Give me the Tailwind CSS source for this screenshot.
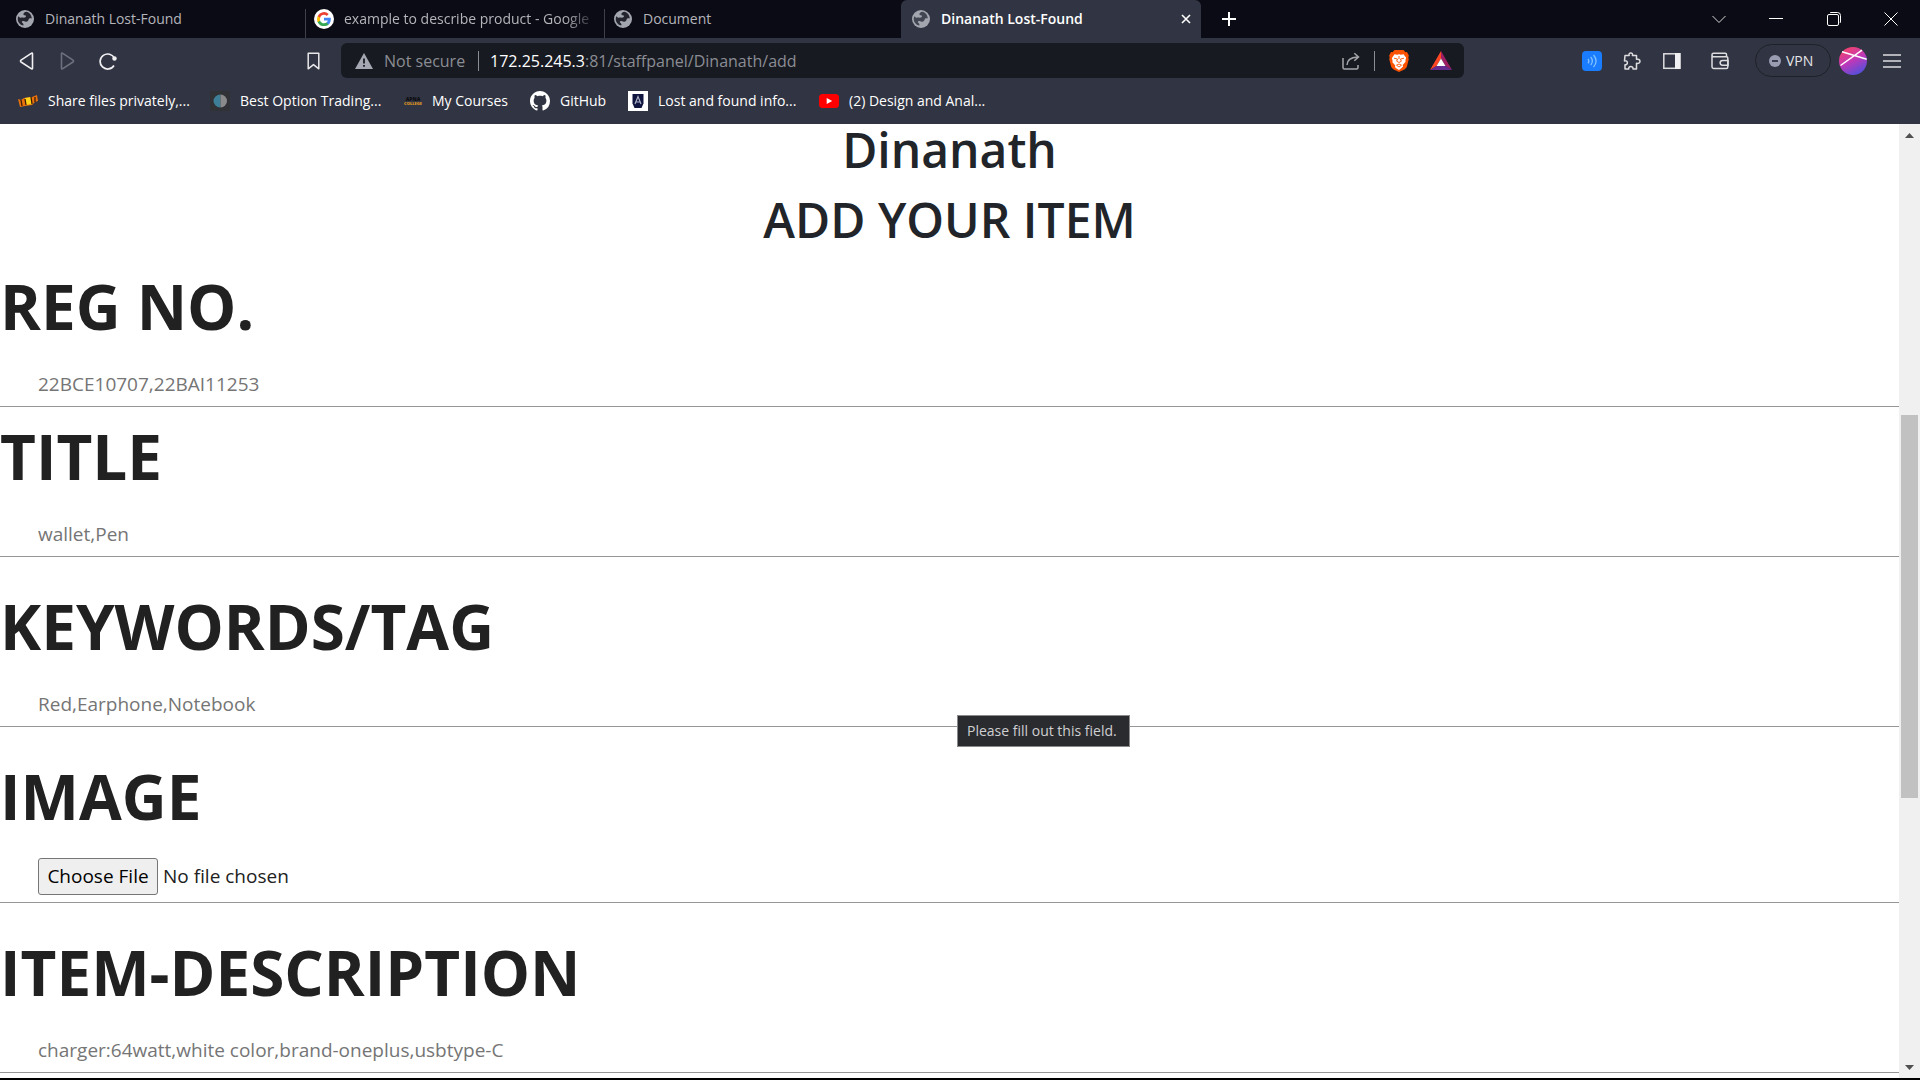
<!DOCTYPE html>
<html lang="en">
<head>
<meta charset="utf-8">
<title>Dinanath Lost-Found</title>
<script src="https://cdn.jsdelivr.net/npm/@tailwindcss/browser@4"></script>
</head>
<body class="flex h-screen flex-col overflow-hidden border-b-2 border-black bg-white font-['Open_Sans',sans-serif]">

<svg class="hidden" aria-hidden="true">
  <symbol id="globe" viewBox="0 0 18 18">
    <circle cx="9" cy="9" r="9" fill="#a3a6ae"/>
    <path d="M10.2 1.7C9 2 7.6 2.700 7.400 4c-.1 1 .5 1.300 1.500 1.300 1.400 0 1.300 1.500.5 2-.8.5-2 .3-3.200.3-1.200 0-1.800.5-2.400 0C3.200 7.200 2.900 6.500 2.200 6.600c-1 2.600-.4 5.400 1.600 7.200 1 .9 2.200 1.600 3.500 1.800.4-.8.100-1.700-.5-2.300-.7-.6-1.300-1.400-.6-2 .8-.6 2-.3 2.900.2 1 .5 2.400.1 3-.8.5-.8.4-1.800 1.200-2.300.8-.5 1.700-.2 2.500 0C15.600 5 13.500 2.300 10.200 1.700Z" fill="currentColor"/>
  </symbol>
</svg>

<header class="flex-none bg-[#313442] text-sm text-white">
  <!-- Tab strip -->
  <div class="flex h-[38px] items-stretch bg-[#0b0b15] text-[#b4b5ba]">
    <div role="tab" class="flex w-[305px] items-center gap-[11px] pl-4">
      <svg class="size-[18px] flex-none text-[#24242e]"><use href="#globe"/></svg><span>Dinanath Lost-Found</span>
    </div>
    <div role="tab" class="relative flex w-[299px] items-center gap-[10px] pl-[9px] pr-1">
      <i class="absolute bottom-0 left-0 top-[9px] w-px bg-[#3f4049]"></i>
      <svg class="size-5 flex-none" viewBox="0 0 20 20">
        <circle cx="10" cy="10" r="10" fill="#fff"/>
        <path d="M16.800 10.200c0-.5 0-.9-.1-1.400H10v2.700h3.800c-.2.900-.6 1.600-1.400 2.100v1.800h2.300c1.300-1.300 2.100-3.100 2.100-5.200Z" fill="#4285f4"/>
        <path d="M10 17.100c1.900 0 3.500-.6 4.700-1.700l-2.300-1.800c-.6.4-1.400.7-2.400.7-1.800 0-3.400-1.200-3.900-2.900H3.700v1.800A7 7 0 0 0 10 17.100Z" fill="#34a853"/>
        <path d="M6.100 11.400a4.200 4.200 0 0 1 0-2.700V6.900H3.700a7 7 0 0 0 0 6.300l2.400-1.800Z" fill="#fbbc05"/>
        <path d="M10 5.800c1 0 2 .4 2.700 1.100l2-2A7 7 0 0 0 3.700 6.900l2.400 1.800C6.600 7 8.200 5.800 10 5.800Z" fill="#ea4335"/>
      </svg>
      <span class="whitespace-nowrap [mask-image:linear-gradient(to_right,#000_90%,#0004)]">example to describe product - Google</span>
    </div>
    <div role="tab" class="relative flex w-[297px] items-center gap-[11px] pl-[10px]">
      <i class="absolute bottom-0 left-0 top-[9px] w-px bg-[#3f4049]"></i>
      <svg class="size-[18px] flex-none text-[#24242e]"><use href="#globe"/></svg><span>Document</span>
    </div>
    <div role="tab" aria-selected="true" class="flex w-[300px] items-center gap-[11px] rounded-t-md bg-[#313442] pl-[11px] pr-[10px] font-semibold text-white">
      <svg class="size-[18px] flex-none text-[#424552]"><use href="#globe"/></svg><span class="flex-1">Dinanath Lost-Found</span>
      <button aria-label="Close tab" class="block"><svg class="size-[10px]" viewBox="0 0 10 10" fill="none" stroke="#fff" stroke-width="1.600"><path d="M1 1l8 8M9 1l-8 8"/></svg></button>
    </div>
    <button aria-label="New tab" class="ml-5"><svg class="size-4" viewBox="0 0 16 16" stroke="#fff" stroke-width="2"><path d="M8 1v14M1 8h14"/></svg></button>
    <div class="ml-auto flex w-[230px] items-center justify-between pl-[22px] pr-[22px]">
      <button aria-label="Search tabs"><svg class="size-[14px]" viewBox="0 0 14 14" fill="none" stroke="#d8d8da"><path d="M.5 4L7 10.500 13.500 4"/></svg></button>
      <button aria-label="Minimize"><svg class="size-[14px]" viewBox="0 0 14 14" stroke="#fff"><path d="M0 6.500h14"/></svg></button>
      <button aria-label="Restore"><svg class="size-[14px]" viewBox="0 0 14 14" fill="none" stroke="#fff"><rect x=".5" y="2.500" width="11" height="11" rx="1.500"/><path d="M3 .8C3.500.5 4 .5 5 .5h5.500a3 3 0 0 1 3 3V9c0 1-.1 1.500-.5 2"/></svg></button>
      <button aria-label="Close"><svg class="size-[14px]" viewBox="0 0 14 14" stroke="#fff"><path d="M.5.5l13 13M13.500.5l-13 13"/></svg></button>
    </div>
  </div>

  <!-- Toolbar -->
  <div class="flex h-[45px] items-center pl-[19px] pr-[19px]">
    <div class="flex w-[303px] items-center">
      <button aria-label="Back"><svg class="size-[18px]" viewBox="0 0 18 18" fill="none" stroke="#f0f0f2" stroke-width="1.600" stroke-linejoin="round"><path d="M13.500 1.800v14.400c0 .8-.7 1-1.300.5L2 10c-.7-.5-.7-1.300 0-1.800L12.200 1.300c.6-.5 1.300-.3 1.300.5Z"/></svg></button>
      <button aria-label="Forward" class="ml-[22px]"><svg class="size-[18px]" viewBox="0 0 18 18" fill="none" stroke="#6d707d" stroke-width="1.600" stroke-linejoin="round"><path d="M2.500 1.800v14.400c0 .8.7 1 1.300.5L14 10c.7-.5.7-1.300 0-1.800L3.800 1.300c-.6-.5-1.300-.3-1.300.5Z"/></svg></button>
      <button aria-label="Reload" class="ml-[22px]"><svg class="size-[18px]" viewBox="0 0 18 18" fill="none" stroke="#f0f0f2" stroke-width="1.700"><path d="M15.500 6.500A7.500 7.500 0 1 0 15 13.500"/><circle cx="15.500" cy="6.500" r="2.200" fill="#f0f0f2" stroke="none"/></svg></button>
      <button aria-label="Bookmark" class="ml-auto"><svg class="size-[18px]" viewBox="0 0 18 18" fill="none" stroke="#e8e8ea" stroke-width="1.500" stroke-linejoin="round"><path d="M4.200 1.200h10.600v15.600L9.500 12.600l-5.300 4.200z"/></svg></button>
    </div>
    <div class="ml-[19px] flex h-[35px] w-[1123px] items-center rounded-md bg-[#181a21] pl-[14px] pr-3 text-base text-[#8b8d94]">
      <svg class="h-4 w-[18px]" viewBox="0 0 18 16"><path d="M9 0l9 16H0z" fill="#a5a8b2"/><path d="M9 5.500v5M9 12v1.800" stroke="#181a21" stroke-width="1.800"/></svg>
      <span class="ml-[11px] w-[94px]">Not secure</span>
      <i class="h-5 w-px bg-[#8b8d94]"></i>
      <span class="ml-[11px] flex-1"><span class="text-white">172.25.245.3</span>:81/staffpanel/Dinanath/add</span>
      <button aria-label="Share"><svg class="size-[18px]" viewBox="0 0 18 18" fill="none" stroke="#a5a6aa" stroke-width="1.500"><path d="M1 6v9.500c0 1 .5 1.500 1.500 1.500h12c1 0 1.500-.5 1.500-1.500V13"/><path d="M5 13c0-5 3.500-7.500 10.500-8M12.300 1.200L16.500 5l-4.200 3.800"/></svg></button>
      <i class="ml-[14px] h-5 w-px bg-[#8b8d94]"></i>
      <button aria-label="Brave Shields" class="ml-[14px]"><svg class="h-[22px] w-5" viewBox="0 0 20 22"><path d="M5.500 0h9l2 2.200 1.500-.2 1.800 3.500-.5 2.500.5 1-2 8-2 2.200L10 22l-5.800-2.800-2-2.200-2-8 .5-1L.2 5.500 2 2l1.500.2z" fill="#fb5200"/><path d="M5.500 4.200l2.700.6L10 4.200l1.800.6 2.700-.6 2.700 3.600-.8 2.500.2 1.500-2.900 3.200.4 1.500-1.600 1.600L10 20l-2.500-1.500-1.600-1.600.4-1.500-2.900-3.200.2-1.500-.8-2.500z" fill="#fff"/><path d="M5 8.200l3.500.8-.8 2.200 2.300 1.300 2.300-1.300-.8-2.200 3.500-.8M7.500 15.200L10 14l2.500 1.200L10 17zM10 6v3" fill="none" stroke="#fb5200" stroke-width=".9"/></svg></button>
      <button aria-label="Brave Rewards" class="ml-[21px]"><svg class="h-[19px] w-[22px]" viewBox="0 0 22 19"><path d="M11 0L0 19l6.500-4L11 7.500z" fill="#ff4724"/><path d="M11 0l11 19-6.500-4L11 7.500z" fill="#9e1f63"/><path d="M0 19h22l-6.500-4h-9z" fill="#662d91"/><path d="M11 7.500l4.500 7.500h-9z" fill="#fff"/></svg></button>
    </div>
    <div class="ml-auto flex items-center">
      <button aria-label="Sound extension"><svg class="size-5" viewBox="0 0 20 20" fill="none" stroke="#7fc0ff" stroke-width="1.300"><rect width="20" height="20" rx="4" fill="#1a7cff" stroke="none"/><path d="M6 7.800q1.800 2.200 0 4.500M8.700 6q3.300 4 0 8M11.500 4q5.200 6 0 12"/></svg></button>
      <button aria-label="Extensions" class="ml-[21px]"><svg class="size-[18px]" viewBox="0 0 18 18" fill="none" stroke="#dddde0" stroke-width="1.500" stroke-linejoin="round"><path d="M2 3.500h4.200C5.500 1.800 6.600 1 7.800 1s2.300.8 1.600 2.500h4.100v3.800c1.700-.4 3.500.3 3.500 2s-1.800 2.500-3.500 2V17H10c.3-1.500-.7-2.500-2.200-2.500S5.300 15.500 5.800 17H2v-4.200c1.300.2 2.400-.6 2.400-2S3.300 8.600 1.500 8.900z"/></svg></button>
      <button aria-label="Sidebar" class="ml-[22px]"><svg class="size-[18px]" viewBox="0 0 18 18"><rect x=".8" y="1.800" width="16" height="14.500" fill="none" stroke="#dddde0" stroke-width="1.500"/><path d="M12 1h5.500v16H12z" fill="#f0f0f2"/></svg></button>
      <button aria-label="Wallet" class="ml-[30px]"><svg class="size-[18px]" viewBox="0 0 18 18" fill="none" stroke="#dddde0" stroke-width="1.500"><path d="M15.500 5V2.500c0-.8-.5-1.300-1.300-1.300H2.500C1.500 1.200 1 1.800 1 2.800v12c0 1.200.5 1.700 1.700 1.700h12.600c1 0 1.500-.5 1.500-1.500V6c0-.8-.5-1.200-1.300-1.200H2.500C1.500 4.800 1 4 1 3"/><path d="M17 8.500h-5.500a2.300 2.300 0 0 0 0 4.700H17z"/></svg></button>
      <button class="ml-[26px] flex h-[33px] w-[76px] items-center gap-[5px] rounded-full border border-[#1e2029] pl-[13px] text-[#e4e4e8]">
        <svg class="size-3" viewBox="0 0 12 12"><circle cx="6" cy="6" r="6" fill="#9a9cb2"/><path d="M3 6h6" stroke="#313442" stroke-width="1.800"/></svg><span>VPN</span>
      </button>
      <button aria-label="Profile" class="ml-2"><svg class="size-7" viewBox="0 0 28 28"><defs><linearGradient id="av" x1=".3" y1="0" x2=".8" y2="1"><stop offset="0" stop-color="#f4436c"/><stop offset=".45" stop-color="#c038b8"/><stop offset="1" stop-color="#4552e0"/></linearGradient></defs><circle cx="14" cy="14" r="14" fill="url(#av)"/><path d="M1.500 18.500L23 3.200M3 4.800l24.700 7.500" stroke="#fff" stroke-width="1.500"/></svg></button>
      <button aria-label="Menu" class="ml-4"><svg class="size-[18px]" viewBox="0 0 18 18" stroke="#dddde0" stroke-width="1.500"><path d="M0 3h18M0 9h18M0 15h18"/></svg></button>
    </div>
  </div>

  <!-- Bookmarks bar -->
  <nav class="flex h-[41px] items-center whitespace-nowrap pb-[6px] pl-[18px]">
    <a href="#" class="flex w-[192px] items-center gap-[10px]"><svg class="size-5" viewBox="0 0 20 20"><path d="M0 8l3 1 3-2 8-1 5-2 1 6-3 1-3 3-7 1-5 1z" fill="#e8720c"/><path d="M7 7l6-1 1 7-6 1z" fill="#ffd21c"/><path d="M3 9l1 6M7 8l1 6M13 6l1 7M17 6l0 5" stroke="#3a1a08" stroke-width="1.300"/></svg><span>Share files privately,...</span></a>
    <a href="#" class="flex w-[193px] items-center gap-[10px]"><svg class="size-5" viewBox="0 0 20 20"><rect width="20" height="20" fill="#303236"/><path d="M10.500 3.500v13a7 6.500 0 0 1 0-13z" fill="#3d7f96"/><path d="M10.500 3.500v13a6.500 6.500 0 0 0 0-13z" fill="#8a8a8a"/></svg><span>Best Option Trading...</span></a>
    <a href="#" class="flex w-[127px] items-center gap-[9px]"><svg class="size-5" viewBox="0 0 20 20" font-family="Open Sans" font-weight="800" text-anchor="middle"><text x="10" y="10" font-size="5" fill="#0d0d10">APNA</text><text x="10" y="14" font-size="4" fill="#e09a22">COLLEGE</text></svg><span>My Courses</span></a>
    <a href="#" class="flex w-[98px] items-center gap-[10px]"><svg class="size-5" viewBox="0 0 16 16" fill="#fff"><path d="M8 0C3.580 0 0 3.580 0 8c0 3.540 2.290 6.530 5.470 7.590.4.070.55-.17.55-.38 0-.19-.01-.82-.01-1.490-2.010.37-2.530-.49-2.690-.94-.09-.23-.48-.94-.82-1.130-.28-.15-.68-.52-.01-.53.63-.01 1.080.58 1.230.82.72 1.210 1.870.87 2.330.66.070-.52.28-.87.510-1.070-1.780-.2-3.640-.89-3.640-3.950 0-.87.310-1.590.82-2.150-.08-.2-.36-1.020.08-2.120 0 0 .67-.21 2.200.82.64-.18 1.320-.27 2-.27s1.360.09 2 .27c1.530-1.040 2.200-.82 2.200-.82.44 1.100.16 1.920.08 2.120.51.56.82 1.270.82 2.150 0 3.070-1.870 3.750-3.650 3.950.29.25.54.73.54 1.480 0 1.070-.01 1.930-.01 2.200 0 .21.15.46.55.38A8.010 8.010 0 0 0 16 8c0-4.420-3.580-8-8-8Z"/></svg><span>GitHub</span></a>
    <a href="#" class="flex w-[191px] items-center gap-[10px]"><svg class="size-5" viewBox="0 0 20 20"><rect width="20" height="20" fill="#fff"/><path d="M4.500 3h11v9.500L13.500 17h-7l-2-4.500z" fill="#10153f"/><path d="M7 13l3-7.500L13 13M8 11h4" fill="none" stroke="#aeb2c8" stroke-width="1.200"/></svg><span>Lost and found info...</span></a>
    <a href="#" class="flex items-center gap-[10px]"><svg class="size-5" viewBox="0 0 20 20"><rect y="3" width="20" height="14" rx="3.500" fill="#f00"/><path d="M7.700 7v6l5.500-3z" fill="#fff"/></svg><span>(2) Design and Anal...</span></a>
  </nav>
</header>

<div class="flex min-h-0 flex-1">
  <main class="min-w-0 flex-1 bg-white text-[#212529]">
    <div class="flex flex-col gap-[18px] text-center text-5xl/[52px] font-semibold">
      <h1>Dinanath</h1>
      <h1>ADD YOUR ITEM</h1>
    </div>
    <form class="text-[19px] text-[#212121]">
      <div class="mt-5 flex flex-col gap-[19px]">
        <label for="reg" class="text-[62px] font-bold leading-20">REG NO.</label>
        <input id="reg" required placeholder="22BCE10707,22BAI11253" class="h-[42px] border-b border-[#969696] px-[38px] pb-[3px] placeholder:text-[#757575]">
      </div>
      <div class="mt-[9px] flex flex-col gap-[19px]">
        <label for="title" class="text-[62px] font-bold leading-20">TITLE</label>
        <input id="title" required placeholder="wallet,Pen" class="h-[42px] border-b border-[#969696] px-[38px] pb-[3px] placeholder:text-[#757575]">
      </div>
      <div class="relative mt-[29px] flex flex-col gap-[19px]">
        <label for="tags" class="text-[62px] font-bold leading-20">KEYWORDS/TAG</label>
        <input id="tags" required placeholder="Red,Earphone,Notebook" class="h-[42px] border-b border-[#969696] px-[38px] pb-[3px] placeholder:text-[#757575]">
        <div role="tooltip" class="absolute -bottom-5 left-[957px] flex h-8 w-[173px] items-center border border-[#8a8a8a] bg-[#2a2b2f] pl-[9px] text-sm text-[#cfcfd2]">Please fill out this field.</div>
      </div>
      <div class="mt-[29px] flex flex-col gap-[19px]">
        <label for="image" class="text-[62px] font-bold leading-20">IMAGE</label>
        <input id="image" type="file" class="h-12 border-b border-[#969696] px-[38px] pt-[3px] file:mr-[5px] file:h-[37px] file:w-[120px] file:rounded-[3px] file:border file:border-solid file:border-[#767676] file:bg-[#efefef] file:text-black">
      </div>
      <div class="mt-[29px] flex flex-col gap-[19px]">
        <label for="desc" class="text-[62px] font-bold leading-20">ITEM-DESCRIPTION</label>
        <input id="desc" required placeholder="charger:64watt,white color,brand-oneplus,usbtype-C" class="h-[42px] border-b border-[#969696] px-[38px] pb-[3px] placeholder:text-[#757575]">
      </div>
    </form>
  </main>
  <!-- Page scrollbar -->
  <div class="flex w-[21px] flex-none flex-col items-center bg-[#f0f0f0]" aria-hidden="true">
    <svg class="mt-[9px] h-[5px] w-[9px] flex-none" viewBox="0 0 9 5"><path d="M4.500 0L9 5H0z" fill="#505050"/></svg>
    <div class="basis-[277px]"></div>
    <div class="w-[17px] basis-[383px] bg-[#c1c1c1]"></div>
    <svg class="mb-2 mt-auto h-[5px] w-[9px] flex-none" viewBox="0 0 9 5"><path d="M0 0h9L4.500 5z" fill="#505050"/></svg>
  </div>
</div>
</body>
</html>
